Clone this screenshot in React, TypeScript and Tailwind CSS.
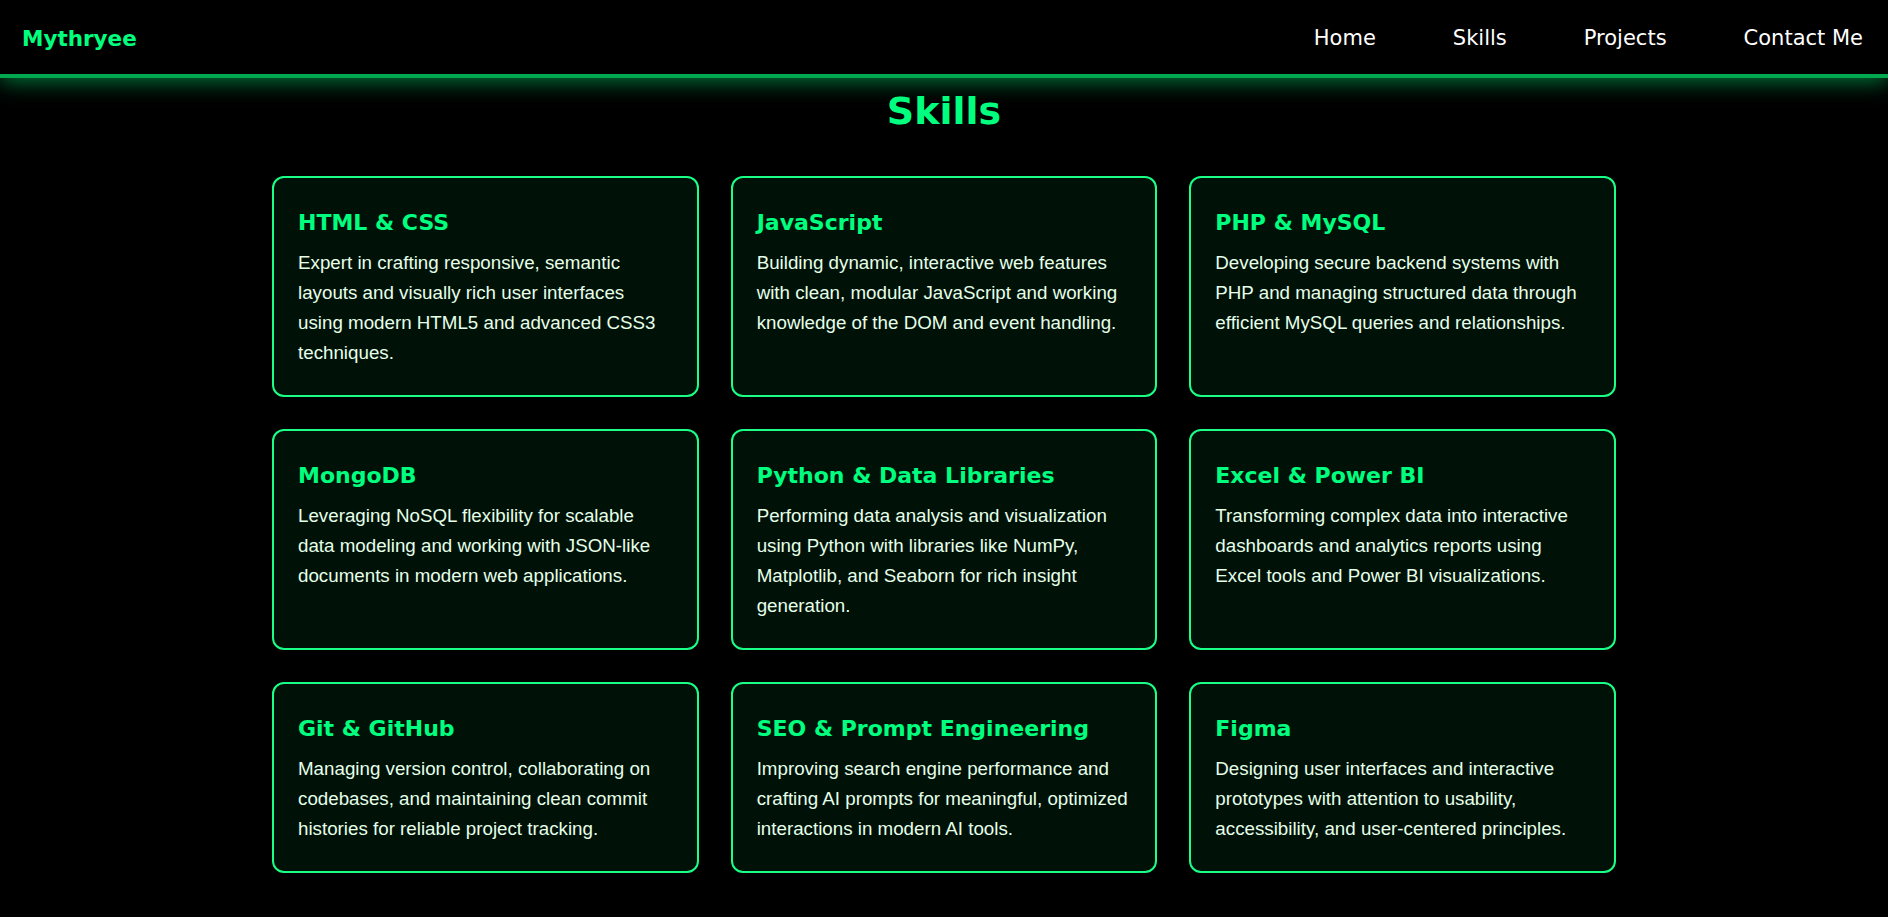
import React from 'react'

const skills = [
    {
        title: 'HTML & CSS',
        text: 'Expert in crafting responsive, semantic layouts and visually rich user interfaces using modern HTML5 and advanced CSS3 techniques.',
    },
    {
        title: 'JavaScript',
        text: 'Building dynamic, interactive web features with clean, modular JavaScript and working knowledge of the DOM and event handling.',
    },
    {
        title: 'PHP & MySQL',
        text: 'Developing secure backend systems with PHP and managing structured data through efficient MySQL queries and relationships.',
    },
    {
        title: 'MongoDB',
        text: 'Leveraging NoSQL flexibility for scalable data modeling and working with JSON-like documents in modern web applications.',
    },
    {
        title: 'Python & Data Libraries',
        text: 'Performing data analysis and visualization using Python with libraries like NumPy, Matplotlib, and Seaborn for rich insight generation.',
    },
    {
        title: 'Excel & Power BI',
        text: 'Transforming complex data into interactive dashboards and analytics reports using Excel tools and Power BI visualizations.',
    },
    {
        title: 'Git & GitHub',
        text: 'Managing version control, collaborating on codebases, and maintaining clean commit histories for reliable project tracking.',
    },
    {
        title: 'SEO & Prompt Engineering',
        text: 'Improving search engine performance and crafting AI prompts for meaningful, optimized interactions in modern AI tools.',
    },
    {
        title: 'Figma',
        text: 'Designing user interfaces and interactive prototypes with attention to usability, accessibility, and user-centered principles.',
    },
]

const links = ['Home', 'Skills', 'Projects', 'Contact Me']

const App = () => {
    return (
        <div className="min-h-screen bg-black font-['Comic_Sans_MS','DejaVu_Sans',sans-serif]">
            {/* navbar */}
            <nav className="relative z-10 flex items-center justify-between h-[78px] pt-[4px] pl-[22px] pr-[25px] bg-black border-b-4 border-[#00a950] shadow-[0_4px_20px_rgba(0,255,127,0.45)]">
                <div className="text-[21.5px] font-bold text-[#00ff7f]">Mythryee</div>
                <ul className="flex gap-[77px]">
                    {links.map((l) => (
                        <li key={l} className="text-[21px] text-white">{l}</li>
                    ))}
                </ul>
            </nav>

            <section className="pb-10">
                <h2 className="mt-[9px] text-center text-[38px] leading-[48px] font-bold text-[#00ff7f]">Skills</h2>
                <div className="mx-auto mt-[41px] max-w-[1344px] grid grid-cols-3 gap-8">
                    {skills.map((s) => (
                        <div key={s.title} className="bg-[#001208] border-2 border-[#1aff85] rounded-xl px-6 pt-6 pb-[27px]">
                            <h3 className="mt-[5px] mb-[9px] text-[22px] leading-[32px] font-bold text-[#00ff7f]">{s.title}</h3>
                            <p className="font-['Liberation_Sans',Arial,sans-serif] text-[18.75px] leading-[30px] text-[#e6ffe9]">{s.text}</p>
                        </div>
                    ))}
                </div>
            </section>
        </div>
    )
}

export default App
